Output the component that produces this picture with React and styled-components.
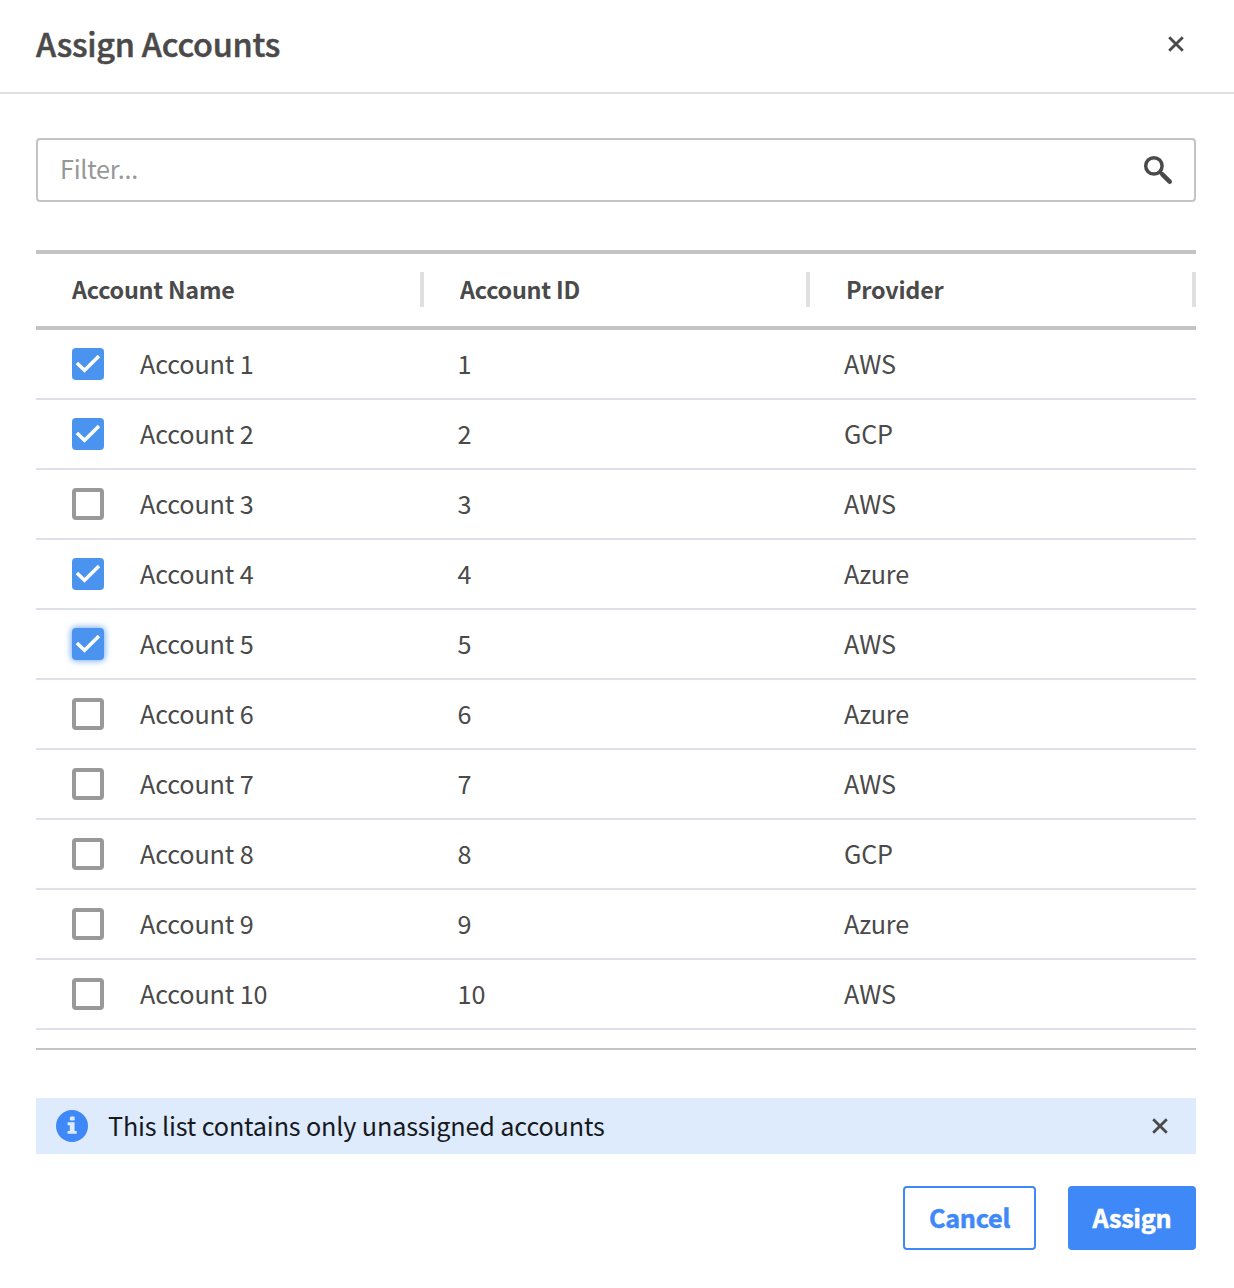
import React, { useState } from "react";
import styled, { createGlobalStyle } from "styled-components";

const GlobalStyle = createGlobalStyle`
  *, *::before, *::after { box-sizing: border-box; }
  body {
    margin: 0;
    background: #fff;
    color: #4a4a4a;
    font-family: "Source Sans Pro", "Noto Sans CJK SC", "Noto Sans", sans-serif;
    font-size: 25.2px;
    letter-spacing: -0.15px;
  }
  button, input { font: inherit; color: inherit; letter-spacing: inherit; }
`;

const Dialog = styled.section`
  display: flex;
  flex-direction: column;
  width: 1234px;
  height: 1288px;
  background: #fff;
`;

const DialogHeader = styled.header`
  display: flex;
  align-items: center;
  justify-content: space-between;
  height: 94px;
  padding: 0 50px 4px 36px;
  border-bottom: 2px solid #e0e0e0;
`;

const Title = styled.h1`
  margin: 0;
  padding-bottom: 2px;
  font-size: 32.4px;
  line-height: 40px;
  font-weight: 500;
  letter-spacing: -0.24px;
  -webkit-text-stroke: 0.5px currentColor;
`;

const IconButton = styled.button`
  display: flex;
  padding: 0;
  border: 0;
  background: none;
  cursor: pointer;
`;

const Body = styled.div`
  display: flex;
  flex-direction: column;
  padding: 44px 38px 0 36px;
`;

const FilterBox = styled.label`
  display: flex;
  align-items: center;
  height: 64px;
  padding: 0 20px 0 22px;
  border: 2px solid #c4c4c4;
  border-radius: 4px;
`;

const FilterInput = styled.input`
  flex: 1;
  min-width: 0;
  height: 44px;
  padding: 0 0 4px;
  border: 0;
  outline: 0;
  background: none;
  letter-spacing: -0.25px;
  &::placeholder { color: #979797; opacity: 1; }
`;

const Table = styled.div`
  margin-top: 48px;
  height: 800px;
  border-top: 4px solid #c4c4c4;
  border-bottom: 2px solid #c4c4c4;
`;

const columns = "388px 386px 386px";

const HeadRow = styled.div`
  display: grid;
  grid-template-columns: ${columns};
  align-items: center;
  height: 76px;
  padding-bottom: 1px;
  border-bottom: 4px solid #c4c4c4;
`;

const HeadCell = styled.div`
  height: 35px;
  padding-left: 36px;
  border-right: 4px solid #e0e0e0;
  font-size: 23.4px;
  line-height: 35px;
  font-weight: 700;
  letter-spacing: -0.24px;
`;

const Row = styled.div`
  display: grid;
  grid-template-columns: ${columns};
  align-items: center;
  height: 70px;
  border-bottom: 2px solid #dde0eb;
`;

const Cell = styled.div`
  display: flex;
  align-items: center;
  gap: 36px;
  padding-left: ${(p) => p.$inset}px;
`;

const CellText = styled.span`
  padding-bottom: 2px;
  line-height: 36px;
`;

const Checkbox = styled.button`
  display: flex;
  width: 32px;
  height: 32px;
  padding: 0;
  border: ${(p) => (p.$checked ? "0" : "4px solid #999")};
  border-radius: 4px;
  background: ${(p) => (p.$checked ? "#4a93ee" : "#fff")};
  box-shadow: ${(p) => (p.$focused ? "0 0 6px 1px rgba(74, 147, 238, 0.75)" : "none")};
  outline: 0;
  cursor: pointer;
`;

const Notice = styled.div`
  display: flex;
  align-items: center;
  height: 56px;
  margin-top: 48px;
  padding: 0 28px 0 20px;
  background: #deebfd;
`;

const NoticeText = styled.span`
  flex: 1;
  margin-left: 20px;
  padding-bottom: 2px;
  color: #16191d;
  line-height: 36px;
`;

const Actions = styled.footer`
  display: flex;
  justify-content: flex-end;
  gap: 32px;
  margin-top: 32px;
`;

const Button = styled.button`
  width: ${(p) => p.$width}px;
  height: 64px;
  padding: 0 0 2px;
  border: 2px solid #3f88f7;
  border-radius: 4px;
  background: ${(p) => (p.$primary ? "#3f88f7" : "#fff")};
  color: ${(p) => (p.$primary ? "#fff" : "#3f88f7")};
  font-weight: 700;
  line-height: 36px;
  letter-spacing: -0.25px;
  -webkit-text-stroke: 0.5px currentColor;
  cursor: pointer;
`;

const CloseIcon = () => (
  <svg width="16" height="16" viewBox="0 0 16 16" fill="none" stroke="#4a4a4a" strokeWidth="2.8">
    <path d="M1.2 1.2 14.8 14.8M14.8 1.2 1.2 14.8" />
  </svg>
);

const SearchIcon = () => (
  <svg width="32" height="32" viewBox="0 0 32 32" fill="none" stroke="#4a4a4a">
    <circle cx="11.9" cy="11.9" r="8.2" strokeWidth="3.5" />
    <path d="M17.6 17.6 21 21" strokeWidth="3.8" />
    <path d="M20.8 20.8 27.7 27.7" strokeWidth="4.6" strokeLinecap="round" />
  </svg>
);

const CheckIcon = () => (
  <svg width="32" height="32" viewBox="0 0 32 32" fill="none" stroke="#fff" strokeWidth="3.5">
    <path d="M4.9 14.9 12.5 22.3 27 7.9" />
  </svg>
);

const InfoIcon = () => (
  <svg width="32" height="32" viewBox="0 0 32 32" fill="#deebfd">
    <circle cx="16" cy="16" r="16" fill="#3f88f7" />
    <rect x="13.9" y="6.5" width="4.8" height="3.9" rx="1.2" />
    <path d="M11.6 12.3h7v8.6h2.1v2.9h-9.1v-2.9h2.2v-5.7h-2.2z" />
  </svg>
);

const providers = ["AWS", "GCP", "AWS", "Azure", "AWS", "Azure", "AWS", "GCP", "Azure", "AWS"];

export default function App() {
  const [selected, setSelected] = useState([1, 2, 4, 5]);
  const [focused, setFocused] = useState(5);

  const toggle = (id) => {
    setFocused(id);
    setSelected((list) => (list.includes(id) ? list.filter((n) => n !== id) : [...list, id]));
  };

  return (
    <>
      <GlobalStyle />
      <Dialog>
        <DialogHeader>
          <Title>Assign Accounts</Title>
          <IconButton aria-label="Close"><CloseIcon /></IconButton>
        </DialogHeader>
        <Body>
          <FilterBox>
            <FilterInput placeholder="Filter..." />
            <SearchIcon />
          </FilterBox>
          <Table>
            <HeadRow>
              <HeadCell>Account Name</HeadCell>
              <HeadCell>Account ID</HeadCell>
              <HeadCell>Provider</HeadCell>
            </HeadRow>
            {providers.map((provider, i) => {
              const id = i + 1;
              const checked = selected.includes(id);
              return (
                <Row key={id}>
                  <Cell $inset={36}>
                    <Checkbox
                      role="checkbox"
                      aria-checked={checked}
                      $checked={checked}
                      $focused={focused === id}
                      onClick={() => toggle(id)}
                    >
                      {checked && <CheckIcon />}
                    </Checkbox>
                    <CellText>Account {id}</CellText>
                  </Cell>
                  <Cell $inset={33.6}><CellText>{id}</CellText></Cell>
                  <Cell $inset={34}><CellText>{provider}</CellText></Cell>
                </Row>
              );
            })}
          </Table>
          <Notice>
            <InfoIcon />
            <NoticeText>This list contains only unassigned accounts</NoticeText>
            <IconButton aria-label="Dismiss"><CloseIcon /></IconButton>
          </Notice>
          <Actions>
            <Button $width={133}>Cancel</Button>
            <Button $width={128} $primary>Assign</Button>
          </Actions>
        </Body>
      </Dialog>
    </>
  );
}
